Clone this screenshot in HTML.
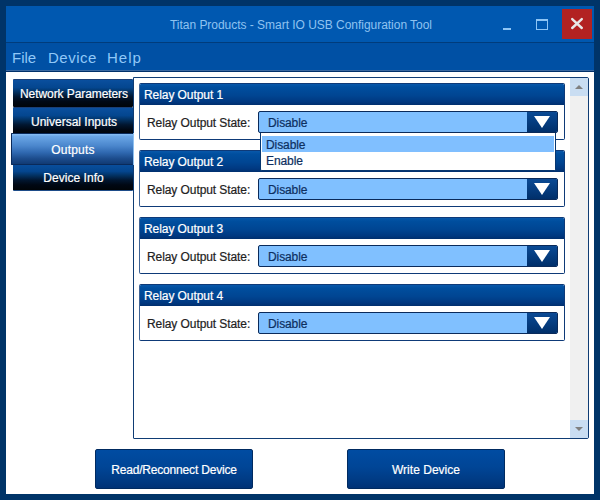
<!DOCTYPE html>
<html><head><meta charset="utf-8">
<style>
*{box-sizing:border-box;margin:0;padding:0}
html,body{width:600px;height:500px;overflow:hidden;background:#003468;font-family:"Liberation Sans",sans-serif}
.a{position:absolute}
#win{left:6px;top:6px;width:588px;height:488px;background:#fff}
#title{left:6px;top:6px;width:588px;height:36px;background:#0058b0}
#sep{left:6px;top:42px;width:588px;height:1px;background:#003c7c}
#menu{left:6px;top:43px;width:588px;height:27px;background:#0050a4}
#ml1{left:6px;top:70px;width:588px;height:1px;background:#3a68a0}
#ml2{left:6px;top:71px;width:588px;height:1px;background:#00306a}
.ttl{color:#8fc3f0;font-size:12px;letter-spacing:-0.03px;white-space:nowrap}
.mi{color:#90c8f8;font-size:15px;white-space:nowrap}
#close{left:562px;top:9px;width:30px;height:30px;background:#b22222}
.tab{left:13px;width:120px;height:28px;border-radius:1px;background:linear-gradient(#0a4f9e,#04468f 28%,#02305f 45%,#011630 62%,#000814 80%,#000408);border-top:1px solid #1a3f78;color:#fff;font-size:12px;text-align:center;line-height:28px;white-space:nowrap;letter-spacing:0.05px;text-indent:1px}
.tab.sel{left:11px;width:122px;height:32px;line-height:32px;background:linear-gradient(#88bff5,#6aa6e6 8%,#4a86cc 40%,#2f68b0 62%,#1c4c8c 82%,#113a74);letter-spacing:0.2px;border:1px solid #0a2a5a;border-right:none}
#panel{left:133px;top:77px;width:456px;height:362px;border:1px solid #0f3c74;border-radius:0 2px 2px 1px;background:#fff}
.sb{left:570px;width:18px;background:#f0f0f0}
.sbb{left:570px;width:18px;height:18px;background:#c9ddf2}
.grp{left:139px;width:426px;height:57px;border:1px solid #0e3a78;border-left-color:#3f6496;border-radius:2px;background:#fff;overflow:hidden}
.gh{position:absolute;left:0;top:0;width:100%;height:21px;background:linear-gradient(#0858aa,#004e9e 15%,#004592 55%,#003880 85%,#002f6e);color:#fff;font-size:12px;white-space:nowrap;letter-spacing:-0.07px}
.gh span{position:absolute;left:4px;top:4px}
.lbl{color:#222;font-size:12px;white-space:nowrap;letter-spacing:-0.08px}
.cb{left:258px;width:300px;height:22px;border:1px solid #0a2a5a;border-radius:2px;background:#80c0ff;overflow:hidden}
.cb .t{position:absolute;left:9px;top:4px;color:#0d2f60;font-size:12px;letter-spacing:-0.1px}
.cb .btn{position:absolute;right:0;top:0;width:30px;height:100%;background:linear-gradient(#0a4a95,#002f6a)}
.btnb{top:449px;width:158px;height:40px;border:1px solid #002a60;border-radius:2px;background:linear-gradient(#004ca2,#004596 45%,#003c86 75%,#003276);color:#fff;font-size:12px;text-align:center;line-height:41px;white-space:nowrap;letter-spacing:-0.18px}
.a,.gh span,.cb .t{-webkit-text-stroke:0.2px currentColor}
.mi,.ttl{-webkit-text-stroke:0}
</style></head><body>
<div id="win" class="a"></div>
<div id="title" class="a"></div>
<div id="sep" class="a"></div>
<div id="menu" class="a"></div>
<div id="ml1" class="a"></div>
<div id="ml2" class="a"></div>
<div class="a ttl" style="left:170px;top:18px">Titan Products - Smart IO USB Configuration Tool</div>
<div class="a" style="left:503px;top:28px;width:8px;height:2px;background:#8ec5f5"></div>
<div class="a" style="left:536px;top:19px;width:12px;height:11px;border:1px solid #8ec5f5;border-top-width:2px"></div>
<div id="close" class="a"><svg width="30" height="30" style="position:absolute;left:0;top:0"><path d="M10.2 10.1 L19.8 19.0 M19.8 10.1 L10.2 19.0" stroke="#e8e8e8" stroke-width="2.4" stroke-linecap="round"/></svg></div>
<div class="a mi" style="left:12px;top:49px">File</div>
<div class="a mi" style="left:48px;top:49px;letter-spacing:0.5px">Device</div>
<div class="a mi" style="left:107px;top:49px;letter-spacing:1px">Help</div>

<div class="a tab" style="top:79px;letter-spacing:-0.08px;text-indent:2px">Network Parameters</div>
<div class="a tab" style="top:107px;letter-spacing:0;text-indent:2px">Universal Inputs</div>
<div class="a tab" style="top:163px;border-bottom:1px solid #1e4c88">Device Info</div>
<div class="a tab sel" style="top:133px">Outputs</div>

<div id="panel" class="a"></div>
<div class="a sb" style="top:78px;height:360px"></div>
<div class="a" style="left:133px;top:133px;width:1px;height:32px;background:#8ec0f0"></div>
<div class="a sbb" style="top:78px"><svg width="18" height="18"><path d="M5 11 L13 11 L9 7 Z" fill="#808080"/></svg></div>
<div class="a sbb" style="top:420px"><svg width="18" height="18"><path d="M5 7 L13 7 L9 11 Z" fill="#808080"/></svg></div>

<div class="a grp" style="top:83px"><div class="gh"><span>Relay Output 1</span></div></div>
<div class="a lbl" style="left:147px;top:116px">Relay Output State:</div>
<div class="a cb" style="top:111px"><span class="t">Disable</span><div class="btn"><svg width="31" height="22"><path d="M7 4 L23 4 L15 16 Z" fill="#fff"/></svg></div></div>

<div class="a grp" style="top:150px"><div class="gh"><span>Relay Output 2</span></div></div>
<div class="a lbl" style="left:147px;top:183px">Relay Output State:</div>
<div class="a cb" style="top:178px"><span class="t">Disable</span><div class="btn"><svg width="31" height="22"><path d="M7 4 L23 4 L15 16 Z" fill="#fff"/></svg></div></div>

<div class="a grp" style="top:217px"><div class="gh"><span>Relay Output 3</span></div></div>
<div class="a lbl" style="left:147px;top:250px">Relay Output State:</div>
<div class="a cb" style="top:245px"><span class="t">Disable</span><div class="btn"><svg width="31" height="22"><path d="M7 4 L23 4 L15 16 Z" fill="#fff"/></svg></div></div>

<div class="a grp" style="top:284px"><div class="gh"><span>Relay Output 4</span></div></div>
<div class="a lbl" style="left:147px;top:317px">Relay Output State:</div>
<div class="a cb" style="top:312px"><span class="t">Disable</span><div class="btn"><svg width="31" height="22"><path d="M7 4 L23 4 L15 16 Z" fill="#fff"/></svg></div></div>

<div class="a" style="left:260px;top:133px;width:296px;height:38px;background:#fff;border:1px solid #063670;border-top:none;border-radius:0 0 2px 2px"></div>
<div class="a" style="left:262px;top:136px;width:292px;height:16px;background:#80bfff"></div>
<div class="a lbl" style="left:266px;top:138px;color:#0d2f60">Disable</div>
<div class="a lbl" style="left:266px;top:154px;color:#0d2f60">Enable</div>

<div class="a btnb" style="left:95px">Read/Reconnect Device</div>
<div class="a btnb" style="left:347px;letter-spacing:0.02px">Write Device</div>
</body></html>
